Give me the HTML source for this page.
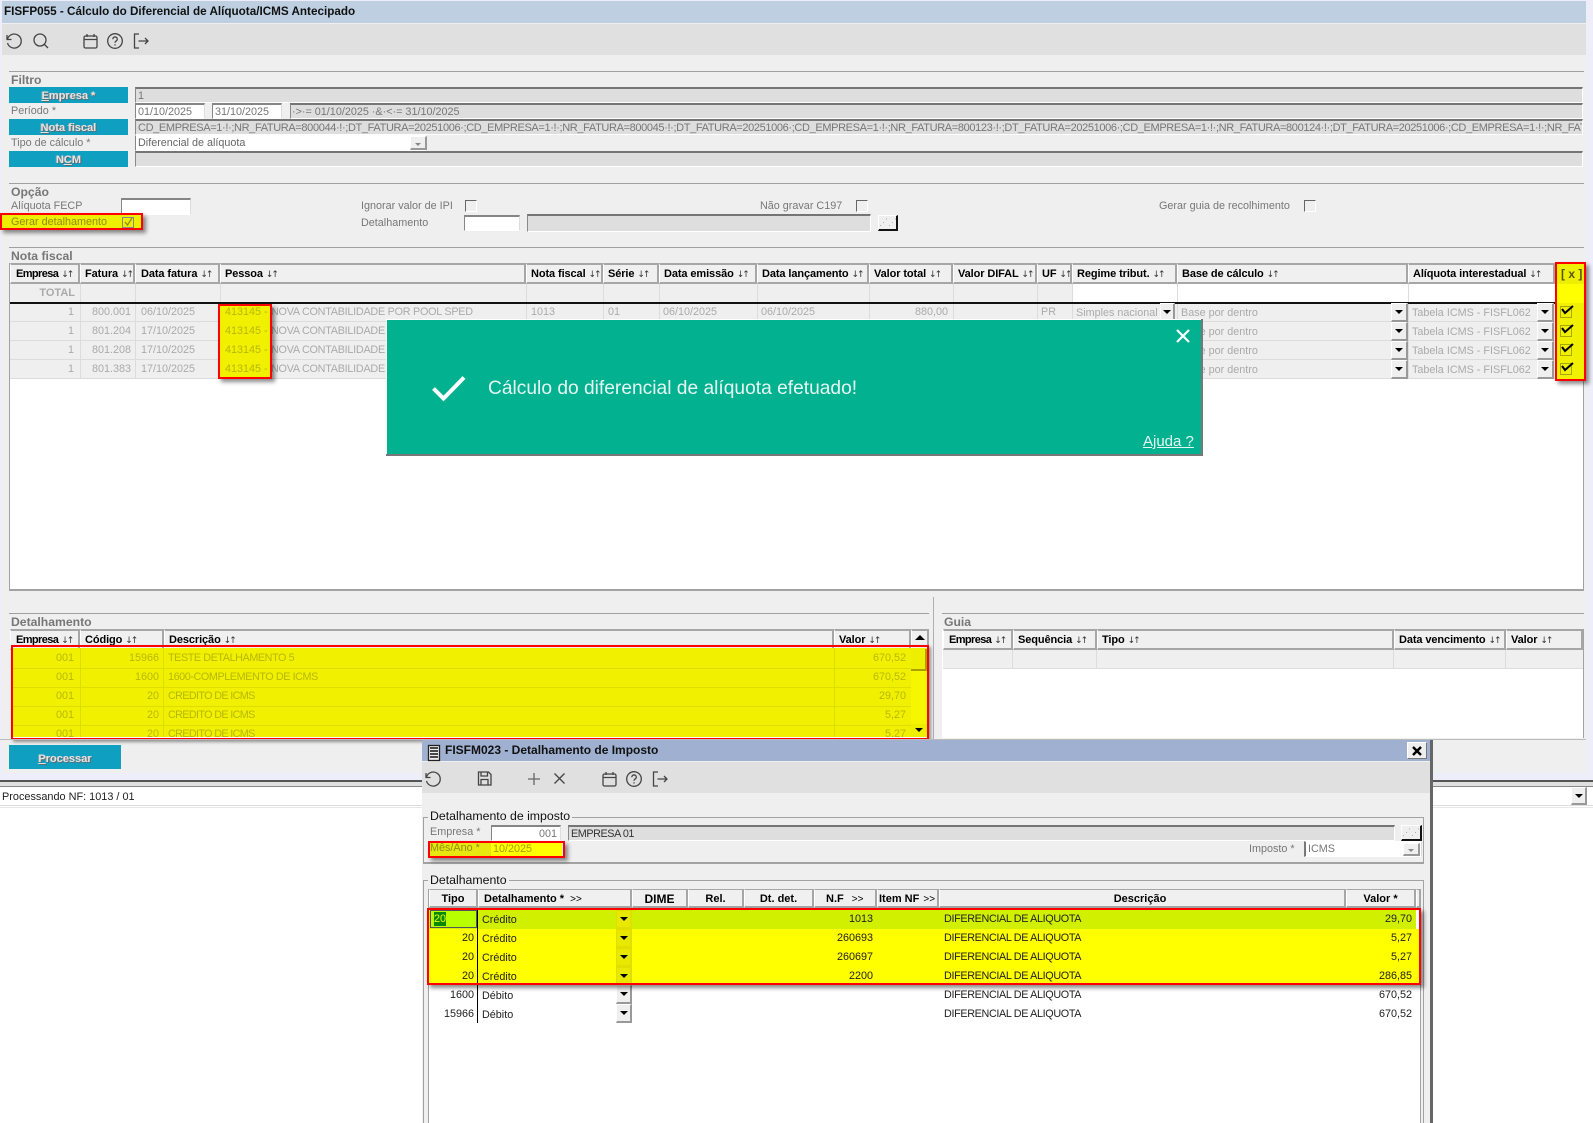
<!DOCTYPE html>
<html lang="pt-BR">
<head>
<meta charset="utf-8">
<title>FISFP055</title>
<style>
html,body{margin:0;padding:0;background:#fff;width:1593px;height:1123px;overflow:hidden}
body{position:relative;font-family:"Liberation Sans",Arial,sans-serif;font-size:10.8px;color:#777}
div{position:absolute;box-sizing:border-box}
.t{white-space:nowrap;line-height:16px;height:14px}
.r{left:0;text-align:right}
.bd{font-weight:bold}
.sec{font-weight:bold;color:#777;font-size:12.2px}
.sep{height:1px;background:#a0a0a0}
.btn{background:#0e9fc1;color:#e4e4e4;text-align:center;font-weight:bold;line-height:19px;text-shadow:1px 1px 0 #5c6b70,-1px 0 0 #7fa5b0;font-size:11px;left:9px;width:119px;height:16px;overflow:hidden}
.f{background:#dedede;border-top:2px solid #757575;border-left:1px solid #8a8a8a;border-bottom:1px solid #fff;border-right:1px solid #fff;color:#777;line-height:15px;padding-left:2px;overflow:hidden;white-space:nowrap}
.i{background:#fff;border-top:2px solid #858585;border-left:1px solid #858585;border-bottom:1px solid #fff;border-right:1px solid #ddd;color:#777;line-height:15px;padding-left:2px;white-space:nowrap}
.k{width:12px;height:12px;top:200px;background:#efefef;border-top:1px solid #666;border-left:1px solid #666;border-right:1px solid #fff;border-bottom:1px solid #fff}
.b{background:#efefef;border-top:1px solid #fff;border-left:1px solid #fff;border-right:2px solid #999;border-bottom:2px solid #999}
.b::after{content:"";position:absolute;left:50%;top:50%;margin:-2px 0 0 -4px;border-left:4px solid transparent;border-right:4px solid transparent;border-top:4px solid #000}
.g::after{border-top-color:#888;border-left-width:3px;border-right-width:3px;border-top-width:3px;margin:0 0 0 -3px}
.dots{background:#efefef;border-top:1px solid #fff;border-left:1px solid #fff;border-right:2px solid #111;border-bottom:2px solid #111;color:#aaa;font-size:9px;text-align:center;line-height:12px}
.h{background:#f0f0f0;top:263px;height:21px;border-top:2px solid #a6a6a6;border-bottom:2px solid #a6a6a6;border-right:2px solid #a6a6a6;border-left:1px solid #fff;font-weight:bold;font-size:11px;letter-spacing:-.1px;color:#000;line-height:19px;white-space:nowrap;overflow:hidden}
.h2{top:629px;height:21px}
.s{font-weight:normal;font-size:9px;letter-spacing:-2px;color:#333;font-family:"DejaVu Sans",sans-serif}
.e{letter-spacing:-.6px}
.v{width:1px;background:#dcdcdc}
.row{height:19px;background:#efefef;border-bottom:1px solid #dcdcdc}
.gy{color:#aaa}
.yt{color:#b8b800}
.ymain{background:#f0f000}
.red{border:2px solid #f00;box-shadow:3px 3px 4px rgba(0,0,0,.45)}
.p{background:#f0f0f0;top:889px;height:19px;border-top:1px solid #a6a6a6;border-bottom:2px solid #a6a6a6;border-right:2px solid #a6a6a6;border-left:1px solid #fff;font-weight:bold;color:#000;line-height:19px;white-space:nowrap;font-size:11px;text-align:center}
.k2{color:#222}
.u1{letter-spacing:-.25px}
.u2{letter-spacing:-.42px}
.u3{letter-spacing:-.65px}
.u4{letter-spacing:-.35px}
svg{position:absolute;overflow:visible}
svg *{fill:none;stroke:#444;stroke-width:1.3}
</style>
</head>
<body>
<div style="left:0;top:0;width:1593px;height:1123px;overflow:hidden">

<!-- main window -->
<div style="left:0;top:0;width:1593px;height:780px;background:#eeeefa"></div>
<div style="left:2px;top:1px;width:1585px;height:772px;background:#efefef"></div>
<div style="left:2px;top:1px;width:1584px;height:22px;background:#bdcfe0"></div>
<div class="t bd" style="left:4px;top:4px;color:#111;font-size:11.7px">FISFP055 - Cálculo do Diferencial de Alíquota/ICMS Antecipado</div>
<div style="left:2px;top:24px;width:1584px;height:31px;background:#e0e0e0"></div>

<svg style="left:6px;top:33px" width="16" height="16" viewBox="0 0 16 16"><path d="M1 2v4.5h4.5M1.4 6.5A7 7 0 1 1 1.5 10"/></svg>
<svg style="left:33px;top:33px" width="16" height="16" viewBox="0 0 16 16"><circle cx="7" cy="7" r="6"/><path d="M11.5 11.5L15 15"/></svg>
<svg style="left:83px;top:33px" width="15" height="16" viewBox="0 0 15 16"><rect x="1" y="3" width="13" height="12" rx="1.5"/><path d="M1 6.5h13M4 1v3M11 1v3"/></svg>
<svg style="left:107px;top:33px" width="16" height="16" viewBox="0 0 16 16"><circle cx="8" cy="8" r="7.3"/><path d="M5.8 6.2c0-3 4.5-3 4.5 0 0 1.8-2.3 1.7-2.3 3.6M8 11.2v1.3"/></svg>
<svg style="left:133px;top:33px" width="16" height="16" viewBox="0 0 16 16"><path d="M6 1H1.5v14H6M5.5 8h9.5M12 5l3 3-3 3"/></svg>

<div class="sep" style="left:9px;top:71px;width:1575px"></div>
<div class="t sec" style="left:11px;top:72px">Filtro</div>

<div class="btn" style="top:87px"><u>E</u>mpresa *</div>
<div class="f" style="left:135px;top:87px;width:1448px;height:16px">1</div>
<div class="t" style="left:11px;top:103px">Período *</div>
<div class="i" style="left:135px;top:103px;width:70px;height:16px">01/10/2025</div>
<div class="i" style="left:212px;top:103px;width:70px;height:16px">31/10/2025</div>
<div class="f" style="left:290px;top:103px;width:1293px;height:16px;padding-left:1px">·&gt;·= 01/10/2025 ·&amp;·&lt;·= 31/10/2025</div>
<div class="btn" style="top:119px"><u>N</u>ota fiscal</div>
<div class="f" style="left:135px;top:119px;width:1448px;height:16px;font-size:11px;letter-spacing:-.36px">CD_EMPRESA=1·!·;NR_FATURA=800044·!·;DT_FATURA=20251006·;CD_EMPRESA=1·!·;NR_FATURA=800045·!·;DT_FATURA=20251006·;CD_EMPRESA=1·!·;NR_FATURA=800123·!·;DT_FATURA=20251006·;CD_EMPRESA=1·!·;NR_FATURA=800124·!·;DT_FATURA=20251006·;CD_EMPRESA=1·!·;NR_FAT</div>
<div class="t" style="left:11px;top:135px">Tipo de cálculo *</div>
<div class="i" style="left:135px;top:135px;width:292px;height:16px;border-top:1px solid #fff;color:#666">Diferencial de alíquota</div>
<div class="b g" style="left:410px;top:136px;width:17px;height:14px"></div>
<div class="btn" style="top:151px">N<u>C</u>M</div>
<div class="f" style="left:135px;top:151px;width:1448px;height:16px"></div>

<div class="sep" style="left:9px;top:183px;width:1575px"></div>
<div class="t sec" style="left:11px;top:184px">Opção</div>
<div class="t" style="left:11px;top:198px">Alíquota FECP</div>
<div class="i" style="left:121px;top:198px;width:70px;height:17px"></div>

<div style="left:2px;top:215px;width:140px;height:14px;background:#eeee00"></div>
<div class="t" style="left:11px;top:214px;color:#8e8e10">Gerar detalhamento</div>
<div class="k" style="left:122px;top:217px;width:12px;height:11px;background:#eeee00;border-color:#888"></div>
<svg style="left:123px;top:217px" width="11" height="10" viewBox="0 0 11 10"><path style="stroke:#8e8e10" d="M2 5l2.5 3L9 1"/></svg>
<div class="red" style="left:0;top:213px;width:143px;height:17px"></div>

<div class="t" style="left:361px;top:198px">Ignorar valor de IPI</div>
<div class="k" style="left:465px"></div>
<div class="t" style="left:361px;top:215px">Detalhamento</div>
<div class="i" style="left:464px;top:215px;width:56px;height:16px"></div>
<div class="f" style="left:527px;top:214px;width:344px;height:18px"></div>
<div class="dots" style="left:878px;top:215px;width:20px;height:16px">⋰⋰</div>
<div class="t" style="left:760px;top:198px">Não gravar C197</div>
<div class="k" style="left:856px"></div>
<div class="t" style="left:1159px;top:198px">Gerar guia de recolhimento</div>
<div class="k" style="left:1304px"></div>

<div class="sep" style="left:9px;top:247px;width:1575px"></div>
<div class="t sec" style="left:11px;top:248px">Nota fiscal</div>

<!-- grid -->
<div style="left:9px;top:263px;width:1575px;height:328px;background:#fff;border:1px solid #a2a2a2;border-bottom:2px solid #a2a2a2"></div>
<div style="left:10px;top:284px;width:1062px;height:18px;background:#efefef"></div>
<div class="t bd r" style="width:75px;top:285px;color:#aaa;font-size:11px">TOTAL</div>
<div class="row" style="left:10px;top:303px;width:1547px"></div>
<div class="row" style="left:10px;top:322px;width:1547px"></div>
<div class="row" style="left:10px;top:341px;width:1547px"></div>
<div class="row" style="left:10px;top:360px;width:1547px"></div>
<div class="v" style="left:80px;top:284px;height:95px"></div>
<div class="v" style="left:135px;top:284px;height:95px"></div>
<div class="v" style="left:220px;top:284px;height:95px"></div>
<div class="v" style="left:526px;top:284px;height:95px"></div>
<div class="v" style="left:603px;top:284px;height:95px"></div>
<div class="v" style="left:659px;top:284px;height:95px"></div>
<div class="v" style="left:757px;top:284px;height:95px"></div>
<div class="v" style="left:869px;top:284px;height:95px"></div>
<div class="v" style="left:953px;top:284px;height:95px"></div>
<div class="v" style="left:1037px;top:284px;height:95px"></div>
<div class="v" style="left:1072px;top:284px;height:95px"></div>
<div class="v" style="left:1177px;top:284px;height:95px"></div>
<div class="v" style="left:1408px;top:284px;height:95px"></div>

<div class="h" style="left:10px;width:70px;padding-left:5px"><span class="e">Empresa</span> <span class="s">↓↑</span></div>
<div class="h" style="left:80px;width:55px;padding-left:4px">Fatura <span class="s">↓↑</span></div>
<div class="h" style="left:135px;width:85px;padding-left:5px">Data fatura <span class="s">↓↑</span></div>
<div class="h" style="left:220px;width:306px;padding-left:4px">Pessoa <span class="s">↓↑</span></div>
<div class="h" style="left:526px;width:77px;padding-left:4px">Nota fiscal <span class="s">↓↑</span></div>
<div class="h" style="left:603px;width:56px;padding-left:4px">Série <span class="s">↓↑</span></div>
<div class="h" style="left:659px;width:98px;padding-left:4px">Data emissão <span class="s">↓↑</span></div>
<div class="h" style="left:757px;width:112px;padding-left:4px">Data lançamento <span class="s">↓↑</span></div>
<div class="h" style="left:869px;width:84px;padding-left:4px">Valor total <span class="s">↓↑</span></div>
<div class="h" style="left:953px;width:84px;padding-left:4px">Valor DIFAL <span class="s">↓↑</span></div>
<div class="h" style="left:1037px;width:35px;padding-left:4px">UF <span class="s">↓↑</span></div>
<div class="h" style="left:1072px;width:105px;padding-left:4px">Regime tribut. <span class="s">↓↑</span></div>
<div class="h" style="left:1177px;width:231px;padding-left:4px">Base de cálculo <span class="s">↓↑</span></div>
<div class="h" style="left:1408px;width:147px;padding-left:4px">Alíquota interestadual <span class="s">↓↑</span></div>
<div style="left:10px;top:302px;width:1574px;height:2px;background:#111"></div>

<!-- row 1 -->
<div class="t gy r" style="width:74px;top:304px">1</div>
<div class="t gy r" style="width:131px;top:304px">800.001</div>
<div class="t gy" style="left:141px;top:304px">06/10/2025</div>
<div class="t gy u1" style="left:271px;top:304px">NOVA CONTABILIDADE POR POOL SPED</div>
<div class="t gy" style="left:531px;top:304px">1013</div>
<div class="t gy" style="left:608px;top:304px">01</div>
<div class="t gy" style="left:663px;top:304px">06/10/2025</div>
<div class="t gy" style="left:761px;top:304px">06/10/2025</div>
<div class="t gy r" style="width:948px;top:304px">880,00</div>
<div class="t gy" style="left:1041px;top:304px">PR</div>
<div class="t gy" style="left:1076px;top:305px">Simples nacional</div>
<div class="b" style="left:1160px;top:303px;width:15px;height:18px"></div>
<div class="t gy" style="left:1181px;top:305px">Base por dentro</div>
<div class="b" style="left:1391px;top:303px;width:17px;height:19px"></div>
<div class="t gy" style="left:1412px;top:305px">Tabela ICMS - FISFL062</div>
<div class="b" style="left:1537px;top:303px;width:17px;height:19px"></div>
<!-- row 2 -->
<div class="t gy r" style="width:74px;top:323px">1</div>
<div class="t gy r" style="width:131px;top:323px">801.204</div>
<div class="t gy" style="left:141px;top:323px">17/10/2025</div>
<div class="t gy u1" style="left:271px;top:323px">NOVA CONTABILIDADE POR POOL SPED</div>
<div class="t gy" style="left:1181px;top:324px">Base por dentro</div>
<div class="b" style="left:1391px;top:322px;width:17px;height:19px"></div>
<div class="t gy" style="left:1412px;top:324px">Tabela ICMS - FISFL062</div>
<div class="b" style="left:1537px;top:322px;width:17px;height:19px"></div>
<!-- row 3 -->
<div class="t gy r" style="width:74px;top:342px">1</div>
<div class="t gy r" style="width:131px;top:342px">801.208</div>
<div class="t gy" style="left:141px;top:342px">17/10/2025</div>
<div class="t gy u1" style="left:271px;top:342px">NOVA CONTABILIDADE POR POOL SPED</div>
<div class="t gy" style="left:1181px;top:343px">Base por dentro</div>
<div class="b" style="left:1391px;top:341px;width:17px;height:19px"></div>
<div class="t gy" style="left:1412px;top:343px">Tabela ICMS - FISFL062</div>
<div class="b" style="left:1537px;top:341px;width:17px;height:19px"></div>
<!-- row 4 -->
<div class="t gy r" style="width:74px;top:361px">1</div>
<div class="t gy r" style="width:131px;top:361px">801.383</div>
<div class="t gy" style="left:141px;top:361px">17/10/2025</div>
<div class="t gy u1" style="left:271px;top:361px">NOVA CONTABILIDADE POR POOL SPED</div>
<div class="t gy" style="left:1181px;top:362px">Base por dentro</div>
<div class="b" style="left:1391px;top:360px;width:17px;height:19px"></div>
<div class="t gy" style="left:1412px;top:362px">Tabela ICMS - FISFL062</div>
<div class="b" style="left:1537px;top:360px;width:17px;height:19px"></div>

<!-- pessoa highlight -->
<div class="ymain" style="left:220px;top:305px;width:50px;height:72px"></div>
<div class="t yt" style="left:225px;top:304px">413145 -</div>
<div class="t yt" style="left:225px;top:323px">413145 -</div>
<div class="t yt" style="left:225px;top:342px">413145 -</div>
<div class="t yt" style="left:225px;top:361px">413145 -</div>
<div class="red" style="left:218px;top:304px;width:54px;height:75px"></div>

<!-- x column highlight -->
<div style="left:1557px;top:264px;width:27px;height:20px;background:#eeee00"></div>
<div style="left:1557px;top:284px;width:27px;height:19px;background:#ffff00"></div>
<div class="ymain" style="left:1557px;top:303px;width:27px;height:77px"></div>
<div class="t bd" style="left:1561px;top:266px;color:#555500;font-size:12px">[ x ]</div>
<div style="left:1560px;top:306px;width:12px;height:12px;border:1px solid #a8a800"></div>
<div style="left:1560px;top:325px;width:12px;height:12px;border:1px solid #a8a800"></div>
<div style="left:1560px;top:344px;width:12px;height:12px;border:1px solid #a8a800"></div>
<div style="left:1560px;top:363px;width:12px;height:12px;border:1px solid #a8a800"></div>
<svg style="left:1561px;top:305px" width="13" height="10" viewBox="0 0 13 10"><path style="stroke:#000;stroke-width:2" d="M1 4l3 4 8-7"/></svg>
<svg style="left:1561px;top:324px" width="13" height="10" viewBox="0 0 13 10"><path style="stroke:#000;stroke-width:2" d="M1 4l3 4 8-7"/></svg>
<svg style="left:1561px;top:343px" width="13" height="10" viewBox="0 0 13 10"><path style="stroke:#000;stroke-width:2" d="M1 4l3 4 8-7"/></svg>
<svg style="left:1561px;top:362px" width="13" height="10" viewBox="0 0 13 10"><path style="stroke:#000;stroke-width:2" d="M1 4l3 4 8-7"/></svg>
<div class="red" style="left:1555px;top:262px;width:31px;height:119px"></div>

<!-- toast -->
<div style="left:386px;top:319px;width:817px;height:137px;background:#fff;border-right:2px solid #777;border-bottom:2px solid #777"></div>
<div style="left:387px;top:320px;width:814px;height:134px;background:#02b18f"></div>
<svg style="left:432px;top:376px" width="34" height="25" viewBox="0 0 34 25"><path style="stroke:#fff;stroke-width:4" d="M1.5 12.5L11.5 22.5L32 1.5"/></svg>
<div class="t" style="left:488px;top:378px;color:#e6f6f2;font-size:19.2px;line-height:22px;height:22px">Cálculo do diferencial de alíquota efetuado!</div>
<svg style="left:1176px;top:329px" width="14" height="14" viewBox="0 0 14 14"><path style="stroke:#fff;stroke-width:2.2" d="M1 1l12 12M13 1L1 13"/></svg>
<div class="t" style="left:1143px;top:433px;color:#e6f6f2;font-size:15px;line-height:18px;height:18px;text-decoration:underline">Ajuda ?</div>

<!-- detalhamento -->
<div class="sep" style="left:9px;top:613px;width:920px"></div>
<div class="t sec" style="left:11px;top:614px">Detalhamento</div>
<div style="left:933px;top:597px;width:1px;height:143px;background:#b0b0b0"></div>
<div class="sep" style="left:942px;top:613px;width:642px"></div>
<div class="t sec" style="left:944px;top:614px">Guia</div>

<div style="left:9px;top:629px;width:920px;height:110px;background:#efefef"></div>
<div class="h h2" style="left:10px;width:70px;padding-left:5px"><span class="e">Empresa</span> <span class="s">↓↑</span></div>
<div class="h h2" style="left:80px;width:84px;padding-left:4px">Código <span class="s">↓↑</span></div>
<div class="h h2" style="left:164px;width:670px;padding-left:4px">Descrição <span class="s">↓↑</span></div>
<div class="h h2" style="left:834px;width:77px;padding-left:4px">Valor <span class="s">↓↑</span></div>
<div class="h h2" style="left:911px;width:18px"></div>
<div class="ymain" style="left:12px;top:648px;width:916px;height:90px"></div>
<div class="v" style="left:80px;top:648px;height:90px;background:#dddd00"></div>
<div class="v" style="left:163px;top:648px;height:90px;background:#dddd00"></div>
<div class="v" style="left:834px;top:648px;height:90px;background:#dddd00"></div>
<div style="left:12px;top:668px;width:900px;height:1px;background:#dddd00"></div>
<div style="left:12px;top:687px;width:900px;height:1px;background:#dddd00"></div>
<div style="left:12px;top:706px;width:900px;height:1px;background:#dddd00"></div>
<div style="left:12px;top:725px;width:900px;height:1px;background:#dddd00"></div>

<div class="t yt r" style="width:74px;top:650px">001</div><div class="t yt r" style="width:159px;top:650px">15966</div><div class="t yt u2" style="left:168px;top:650px">TESTE DETALHAMENTO 5</div><div class="t yt r" style="width:906px;top:650px">670,52</div>
<div class="t yt r" style="width:74px;top:669px">001</div><div class="t yt r" style="width:159px;top:669px">1600</div><div class="t yt u2" style="left:168px;top:669px">1600-COMPLEMENTO DE ICMS</div><div class="t yt r" style="width:906px;top:669px">670,52</div>
<div class="t yt r" style="width:74px;top:688px">001</div><div class="t yt r" style="width:159px;top:688px">20</div><div class="t yt u3" style="left:168px;top:688px">CREDITO DE ICMS</div><div class="t yt r" style="width:906px;top:688px">29,70</div>
<div class="t yt r" style="width:74px;top:707px">001</div><div class="t yt r" style="width:159px;top:707px">20</div><div class="t yt u3" style="left:168px;top:707px">CREDITO DE ICMS</div><div class="t yt r" style="width:906px;top:707px">5,27</div>
<div class="t yt r" style="width:74px;top:726px">001</div><div class="t yt r" style="width:159px;top:726px">20</div><div class="t yt u3" style="left:168px;top:726px">CREDITO DE ICMS</div><div class="t yt r" style="width:906px;top:726px">5,27</div>

<div style="left:911px;top:649px;width:16px;height:22px;background:#eeee00;border-right:2px solid #aaa000;border-bottom:2px solid #aaa000"></div>
<div style="left:911px;top:671px;width:16px;height:53px;background:#f6f600"></div>
<div class="b" style="left:911px;top:724px;width:17px;height:13px;background:#eeee00;border-color:#eeee00"></div>
<div style="left:915px;top:635px;width:0;height:0;border-left:5px solid transparent;border-right:5px solid transparent;border-bottom:5px solid #000"></div>
<div style="left:12px;top:737px;width:916px;height:2px;background:#fff"></div>
<div class="red" style="left:11px;top:645px;width:918px;height:95px;box-shadow:2px 2px 3px rgba(0,0,0,.4)"></div>

<div style="left:942px;top:629px;width:642px;height:109px;background:#fff;border-right:1px solid #a2a2a2"></div>
<div class="h h2" style="left:943px;width:70px;padding-left:5px"><span class="e">Empresa</span> <span class="s">↓↑</span></div>
<div class="h h2" style="left:1013px;width:84px;padding-left:4px">Sequência <span class="s">↓↑</span></div>
<div class="h h2" style="left:1097px;width:297px;padding-left:4px">Tipo <span class="s">↓↑</span></div>
<div class="h h2" style="left:1394px;width:112px;padding-left:4px">Data vencimento <span class="s">↓↑</span></div>
<div class="h h2" style="left:1506px;width:77px;padding-left:4px">Valor <span class="s">↓↑</span></div>
<div style="left:943px;top:650px;width:640px;height:19px;background:#efefef;border-bottom:1px solid #ddd"></div>
<div class="v" style="left:1012px;top:650px;height:19px"></div>
<div class="v" style="left:1096px;top:650px;height:19px"></div>
<div class="v" style="left:1393px;top:650px;height:19px"></div>
<div class="v" style="left:1505px;top:650px;height:19px"></div>
<div style="left:0;top:739px;width:1586px;height:1px;background:#bbb"></div>

<div class="btn" style="top:745px;width:112px;height:24px;line-height:28px"><u>P</u>rocessar</div>

<!-- status -->
<div style="left:0;top:780px;width:1593px;height:2px;background:#555"></div>
<div style="left:0;top:782px;width:1593px;height:4px;background:#e0e0e0"></div>
<div style="left:0;top:786px;width:1593px;height:1px;background:#888"></div>
<div style="left:0;top:805px;width:1593px;height:1px;background:#ddd"></div>
<div style="left:0;top:807px;width:1593px;height:1px;background:#e8e8e8"></div>
<div class="t" style="left:2px;top:789px;color:#222;font-size:10.9px">Processando NF: 1013 / 01</div>
<div class="b" style="left:1571px;top:787px;width:16px;height:18px"></div>

<!-- popup -->
<div style="left:422px;top:740px;width:1011px;height:383px;background:#efefef;border-right:3px solid #666"></div>
<div style="left:422px;top:740px;width:1008px;height:21px;background:#9fb0d0"></div>
<svg style="left:428px;top:745px" width="12" height="16" viewBox="0 0 12 16"><rect x=".5" y=".5" width="11" height="15" style="fill:#eee;stroke:#222"/><path style="stroke:#111;stroke-width:1.5" d="M2 3h8M2 6h8M2 9h8M2 12h8"/></svg>
<div class="t bd" style="left:445px;top:742px;color:#111;font-size:12px">FISFM023 - Detalhamento de Imposto</div>
<div style="left:1407px;top:742px;width:20px;height:17px;background:#eee;border:1px solid #fff;border-right:1px solid #777;border-bottom:1px solid #777"></div>
<svg style="left:1412px;top:746px" width="10" height="10" viewBox="0 0 10 10"><path style="stroke:#000;stroke-width:2.4" d="M1 1l8 8M9 1L1 9"/></svg>
<div style="left:422px;top:762px;width:1008px;height:31px;background:#e0e0e0"></div>
<svg style="left:425px;top:771px" width="16" height="16" viewBox="0 0 16 16"><path d="M1 2v4.5h4.5M1.4 6.5A7 7 0 1 1 1.5 10"/></svg>
<svg style="left:477px;top:771px" width="15" height="15" viewBox="0 0 15 15"><path d="M1.5 1h10l2.5 2.5v10.5H1.5zM4 1v4h6.5V1M4 14V8.5h7V14"/></svg>
<svg style="left:527px;top:772px" width="14" height="14" viewBox="0 0 14 14"><path style="stroke:#666" d="M7 1v12M1 7h12"/></svg>
<svg style="left:554px;top:773px" width="11" height="11" viewBox="0 0 11 11"><path d="M.5.5l10 10M10.5.5l-10 10"/></svg>
<svg style="left:602px;top:771px" width="15" height="16" viewBox="0 0 15 16"><rect x="1" y="3" width="13" height="12" rx="1.5"/><path d="M1 6.5h13M4 1v3M11 1v3"/></svg>
<svg style="left:626px;top:771px" width="16" height="16" viewBox="0 0 16 16"><circle cx="8" cy="8" r="7.3"/><path d="M5.8 6.2c0-3 4.5-3 4.5 0 0 1.8-2.3 1.7-2.3 3.6M8 11.2v1.3"/></svg>
<svg style="left:652px;top:771px" width="16" height="16" viewBox="0 0 16 16"><path d="M6 1H1.5v14H6M5.5 8h9.5M12 5l3 3-3 3"/></svg>

<!-- group 1 -->
<div style="left:423px;top:817px;width:1001px;height:47px;border:1px solid #a2a2a2;border-bottom:2px solid #a2a2a2"></div>
<div class="t" style="left:428px;top:808px;color:#111;background:#efefef;padding:0 2px;font-size:12.3px">Detalhamento de imposto</div>
<div class="t" style="left:430px;top:824px">Empresa *</div>
<div class="i" style="left:491px;top:825px;width:70px;height:16px;text-align:right;padding-right:3px">001</div>
<div class="f" style="left:568px;top:825px;width:827px;height:16px;color:#333"><span class="u2">EMPRESA 01</span></div>
<div class="dots" style="left:1401px;top:825px;width:21px;height:16px">⋰⋰</div>
<div class="t" style="left:1249px;top:841px">Imposto *</div>
<div class="i" style="left:1304px;top:841px;width:118px;height:16px;border-top:1px solid #fff;border-left:2px solid #777">ICMS</div>
<div class="b g" style="left:1403px;top:843px;width:17px;height:13px"></div>

<div style="left:430px;top:843px;width:61px;height:13px;background:#e8e810"></div>
<div style="left:491px;top:843px;width:71px;height:13px;background:#ffff00"></div>
<div class="t" style="left:430px;top:840px;color:#8e8e10">Mês/Ano *</div>
<div class="t" style="left:493px;top:841px;color:#a0a000">10/2025</div>
<div class="red" style="left:428px;top:841px;width:137px;height:17px"></div>

<!-- group 2 -->
<div style="left:423px;top:880px;width:1001px;height:243px;border:1px solid #a2a2a2;border-bottom:0"></div>
<div class="t" style="left:428px;top:872px;color:#111;background:#efefef;padding:0 2px;font-size:12.3px">Detalhamento</div>
<div style="left:428px;top:889px;width:993px;height:234px;background:#fff;border-left:1px solid #a2a2a2;border-right:1px solid #a2a2a2"></div>
<div class="p" style="left:429px;width:49px">Tipo</div>
<div class="p" style="left:478px;width:154px;text-align:left;padding-left:5px">Detalhamento * <span style="margin-left:3px;font-weight:normal;font-size:10px">&gt;&gt;</span></div>
<div class="p" style="left:632px;width:56px;font-size:12px;line-height:19px">DIME</div>
<div class="p" style="left:688px;width:56px">Rel.</div>
<div class="p" style="left:744px;width:70px">Dt. det.</div>
<div class="p" style="left:814px;width:63px;text-align:left;padding-left:11px">N.F <span style="margin-left:5px;font-weight:normal;font-size:10px">&gt;&gt;</span></div>
<div class="p" style="left:877px;width:62px;text-align:left;padding-left:1px">Item NF <span style="margin-left:1px;font-weight:normal;font-size:10px">&gt;&gt;</span></div>
<div class="p" style="left:939px;width:407px;padding-right:4px">Descrição</div>
<div class="p" style="left:1346px;width:70px">Valor *</div>
<div class="p" style="left:1416px;width:5px"></div>

<div style="left:429px;top:910px;width:987px;height:19px;background:#d0f000"></div>
<div style="left:429px;top:929px;width:991px;height:55px;background:#ffff00"></div>
<div style="left:430px;top:910px;width:47px;height:18px;background:#b8ff00;border:1px solid #555"></div>
<div style="left:434px;top:912px;width:12px;height:14px;background:#0b8a00"></div>
<div style="left:477px;top:910px;width:1px;height:113px;background:#000"></div>
<div class="t" style="left:434px;top:911px;color:#eaff00">20</div>
<div class="t k2 r" style="width:474px;top:930px">20</div>
<div class="t k2 r" style="width:474px;top:949px">20</div>
<div class="t k2 r" style="width:474px;top:968px">20</div>
<div class="t k2 r" style="width:474px;top:987px">1600</div>
<div class="t k2 r" style="width:474px;top:1006px">15966</div>
<div class="t k2" style="left:482px;top:912px">Crédito</div>
<div class="t k2" style="left:482px;top:931px">Crédito</div>
<div class="t k2" style="left:482px;top:950px">Crédito</div>
<div class="t k2" style="left:482px;top:969px">Crédito</div>
<div class="t k2" style="left:482px;top:988px">Débito</div>
<div class="t k2" style="left:482px;top:1007px">Débito</div>
<div class="b" style="left:616px;top:910px;width:16px;height:19px;background:#e8e800;border-color:#e0e000"></div>
<div class="b" style="left:616px;top:929px;width:16px;height:19px;background:#e8e800;border-color:#e0e000"></div>
<div class="b" style="left:616px;top:948px;width:16px;height:19px;background:#e8e800;border-color:#e0e000"></div>
<div class="b" style="left:616px;top:967px;width:16px;height:18px;background:#e8e800;border-color:#e0e000"></div>
<div class="b" style="left:616px;top:985px;width:16px;height:19px"></div>
<div class="b" style="left:616px;top:1004px;width:16px;height:19px"></div>
<div class="t k2 r" style="width:873px;top:911px">1013</div>
<div class="t k2 r" style="width:873px;top:930px">260693</div>
<div class="t k2 r" style="width:873px;top:949px">260697</div>
<div class="t k2 r" style="width:873px;top:968px">2200</div>
<div class="t k2 u4" style="left:944px;top:911px">DIFERENCIAL DE ALIQUOTA</div>
<div class="t k2 u4" style="left:944px;top:930px">DIFERENCIAL DE ALIQUOTA</div>
<div class="t k2 u4" style="left:944px;top:949px">DIFERENCIAL DE ALIQUOTA</div>
<div class="t k2 u4" style="left:944px;top:968px">DIFERENCIAL DE ALIQUOTA</div>
<div class="t k2 u4" style="left:944px;top:987px">DIFERENCIAL DE ALIQUOTA</div>
<div class="t k2 u4" style="left:944px;top:1006px">DIFERENCIAL DE ALIQUOTA</div>
<div class="t k2 r" style="width:1412px;top:911px">29,70</div>
<div class="t k2 r" style="width:1412px;top:930px">5,27</div>
<div class="t k2 r" style="width:1412px;top:949px">5,27</div>
<div class="t k2 r" style="width:1412px;top:968px">286,85</div>
<div class="t k2 r" style="width:1412px;top:987px">670,52</div>
<div class="t k2 r" style="width:1412px;top:1006px">670,52</div>
<div class="red" style="left:427px;top:908px;width:994px;height:77px"></div>

</div>
</body>
</html>
